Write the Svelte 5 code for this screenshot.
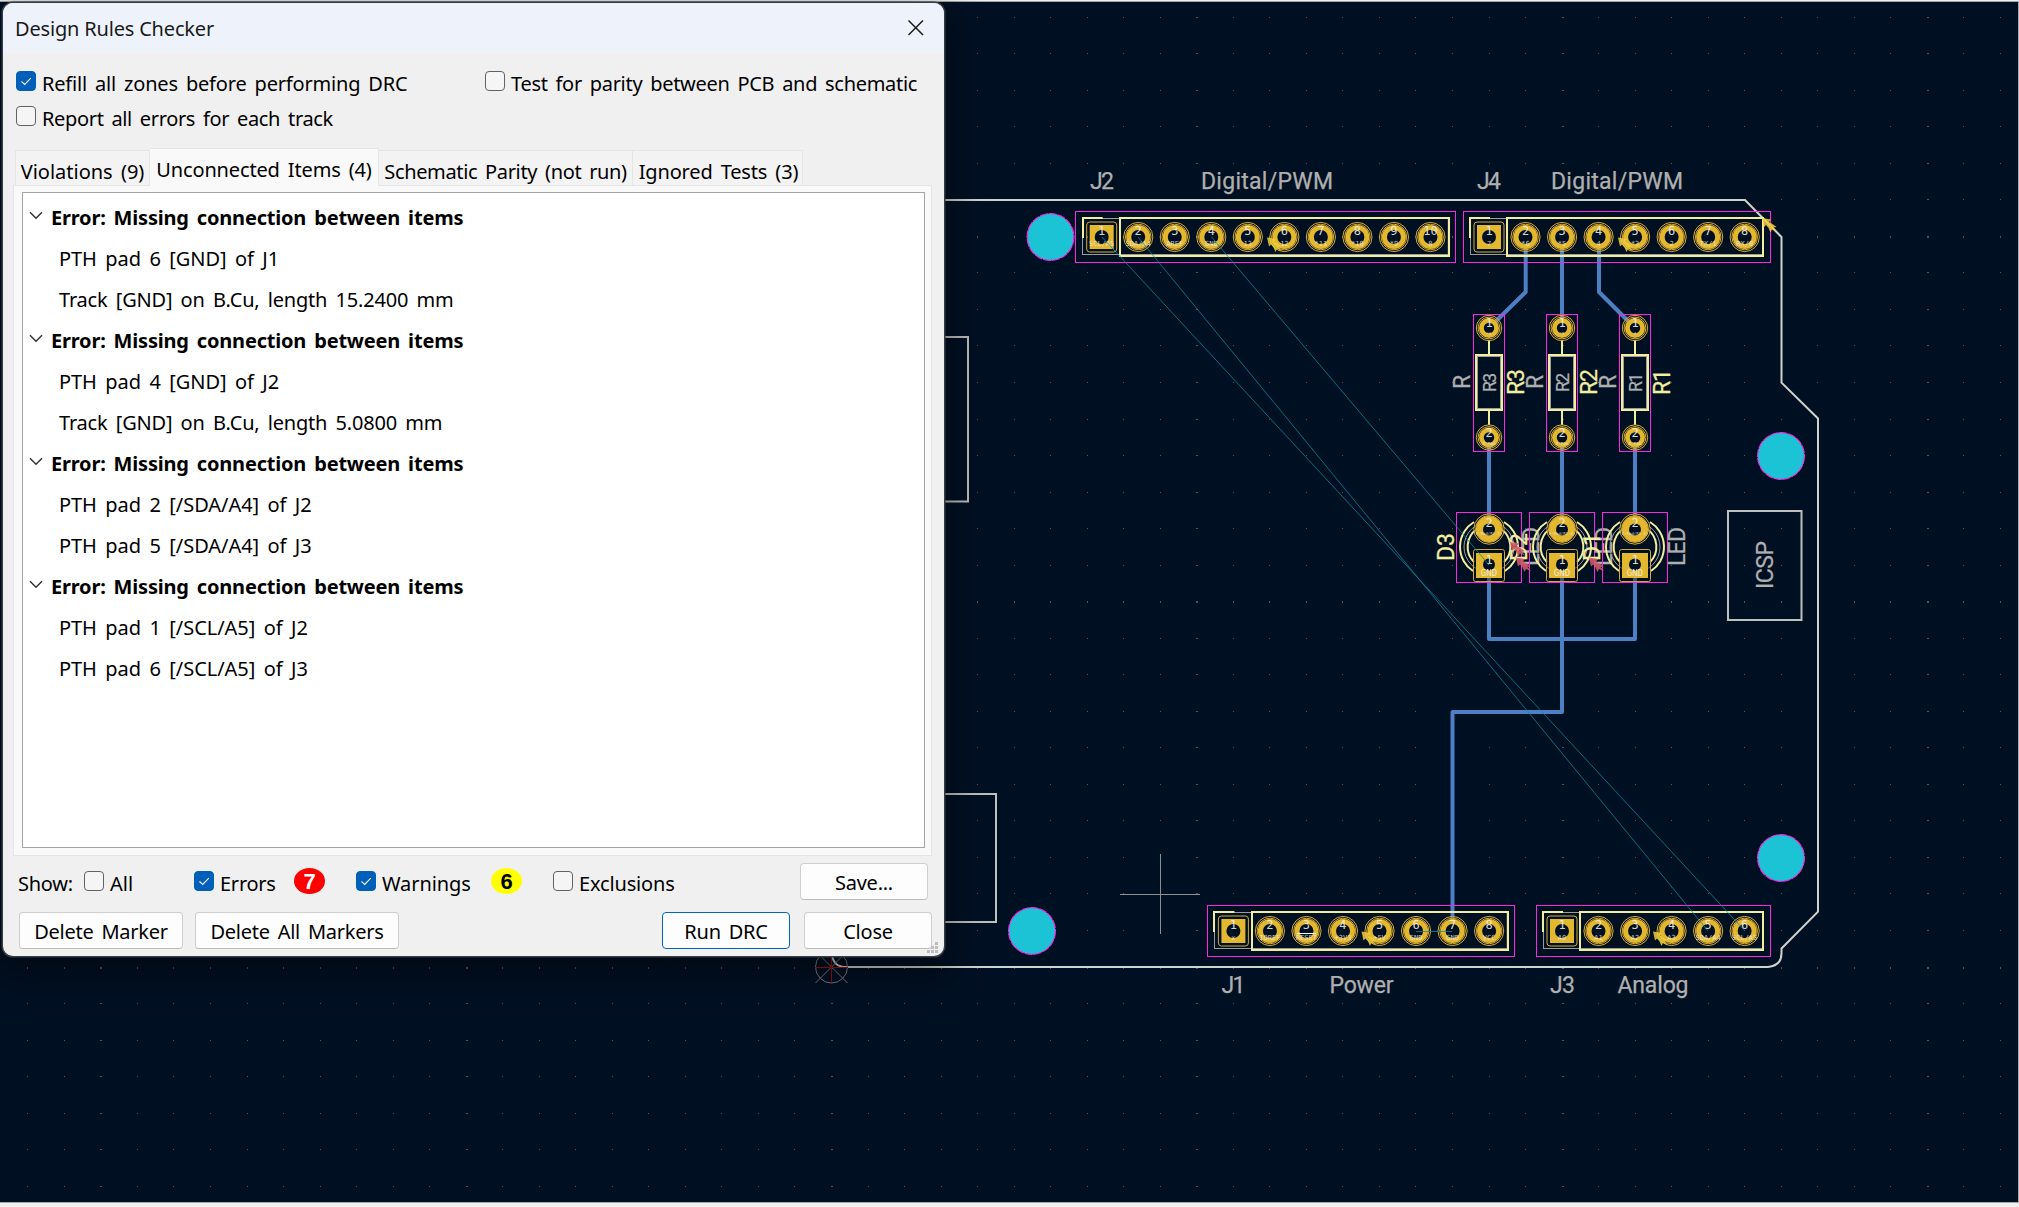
<script>
  const tree = [
    ['PTH pad 6 [GND] of J1', 'Track [GND] on B.Cu, length 15.2400 mm'],
    ['PTH pad 4 [GND] of J2', 'Track [GND] on B.Cu, length 5.0800 mm'],
    ['PTH pad 2 [/SDA/A4] of J2', 'PTH pad 5 [/SDA/A4] of J3'],
    ['PTH pad 1 [/SCL/A5] of J2', 'PTH pad 6 [/SCL/A5] of J3'],
  ];
  const tabs = ['Violations (9)', 'Unconnected Items (4)', 'Schematic Parity (not run)', 'Ignored Tests (3)'];

  // Board grid: 100 mil pitch, every tenth line is heavier
  const P = 36.53;
  const dots = [];
  for (let i = -22; i <= 32; i++) {
    for (let j = -26; j <= 6; j++) {
      const bigX = i % 10 === 0;
      const bigY = j % 10 === 0;
      dots.push({ x: Math.floor(831.5 + i * P), y: Math.floor(967 + j * P), w: bigX ? 2 : 1, h: bigY ? 2 : 1 });
    }
  }

  const headers = [
    { x: 1101.7, y: 237, mark: 1267, nets: ['SCL/A5', 'SDA/A4', 'AREF', 'GND', '13', '12', '*11', '*10', '*9', '8'] },
    { x: 1489, y: 237, mark: 1618, nets: ['7', '*6', '*5', '4', '*3', '2', 'TX/1', 'RX/0'] },
    { x: 1233.4, y: 931, mark: 1361.5, nets: ['x', 'IOREF', 'RESET', '+3V3', '+5V', 'GND', 'GND', 'VCC'] },
    { x: 1562, y: 931, mark: 1653, nets: ['A0', 'A1', 'A2', 'A3', 'SDA/A4', 'SCL/A5'] },
  ];
  const resistors = [
    { x: 1489, ref: 'R3', net: '*6' },
    { x: 1562, ref: 'R2', net: '*5' },
    { x: 1635, ref: 'R1', net: '4' },
  ];
  const leds = [
    { x: 1489, ref: 'D3' },
    { x: 1562, ref: 'D2' },
    { x: 1635, ref: 'D1' },
  ];
  const holes = [[1050.5, 237], [1032, 931], [1781, 456], [1781, 858]];
  const labels = [
    ['J2', 1090, 189, 24], ['Digital/PWM', 1201, 189, 132],
    ['J4', 1477, 189, 24], ['Digital/PWM', 1551, 189, 132],
    ['J1', 1221.5, 993, 24], ['Power', 1329.5, 993, 64],
    ['J3', 1550, 993, 25], ['Analog', 1617.5, 993, 71],
  ];
</script>

{#snippet check(on)}
  <span class="box" class:on>
    {#if on}<svg viewBox="0 0 20 20"><path d="M5.5 10.5 8.7 13.5 14.8 7.2" /></svg>{/if}
  </span>
{/snippet}

{#snippet marker(x, y, kind)}
  <path class={kind} transform="translate({x} {y})" d="M0 0 9 1.500 7 4 10.500 6 14.500 9 11.500 9.500 15 13.500 10 11.500 8.500 14.500 6.500 10 4 7 2 9Z" />
{/snippet}

<div class="screen">
  <svg class="board" width="2019" height="1207" viewBox="0 0 2019 1207">
    <g class="dots">
      {#each dots as d}<rect x={d.x} y={d.y} width={d.w} height={d.h} />{/each}
    </g>

    <path class="edge" d="M832 900V954Q833 967 846 967H1768Q1781.5 966 1781.5 953V948.5L1818 911.7V418.5L1781.5 382.7V237L1745 200H832" />
    <path class="fab2" d="M900 337H968V501.500H900M900 794H996V922H900M1728 511H1801.500V620H1728Z" />

    <g class="origin">
      <circle cx="831.5" cy="967" r="16" />
      <path d="M815.500 951 847.500 983M847.500 951 815.500 983" />
      <path class="red" d="M815 967.500H848M831.500 951V984" />
    </g>
    <path class="cursor" d="M1120 894.500H1200M1160.500 854V934" />

    {#each holes as [x, y]}
      <circle class="hole" cx={x} cy={y} r="23.4" />
    {/each}

    <path class="track" d="M1525.700 237V292L1489 328M1562 237V328M1599 237V292L1635 328M1489 437V529M1562 437V529M1635 437V529M1489 565V639H1635V565M1562 565V712H1452.500V931" />

    {#each headers as h}
      {@const last = h.x + (h.nets.length - 1) * P}
      <rect class="court" x={Math.floor(h.x - 26) + 0.5} y={h.y - 25.5} width={Math.round(last - h.x + 51)} height="51" />
      <rect class="fab" x={Math.floor(h.x - 19) + 0.5} y={h.y - 18.5} width={last - h.x + 37} height="36" />
      <rect class="silk" x={Math.round(h.x + 18.3)} y={h.y - 19} width={Math.round(last - h.x + 0.3)} height="38" />
      <path class="silk" d="M{h.x + 1} {h.y - 19}H{Math.round(h.x - 19)}V{h.y + 1}" />
      {#each h.nets as net, i}
        {@const x = h.x + i * P}
        {#if i === 0}
          <rect class="ring" x={x - 15} y={h.y - 15} width="30" height="30" rx="3" />
          <rect class="pad" x={x - 12} y={h.y - 12} width="24" height="24" />
        {:else}
          <circle class="ring" cx={x} cy={h.y} r="14.6" />
          <circle class="ring" cx={x} cy={h.y} r="12.8" />
          <circle class="pad" cx={x} cy={h.y} r="12" />
        {/if}
        <circle class="drill" cx={x} cy={h.y} r="7" />
        <text class="num" {x} y={h.y - 2}>{i + 1}</text>
        <text class="net" {x} y={h.y + 8.5}>{net}</text>
      {/each}
      {@render marker(h.mark, h.y + 0.5, 'warn')}
    {/each}
    <path class="bar" d="M1297 933.500H1316" />
    {@render marker(1762, 218, 'warn')}

    {#each resistors as r}
      <rect class="court" x={r.x - 15.5} y="314.5" width="31" height="137" />
      <path class="silk" d="M{r.x} 340V355M{r.x} 411V425" />
      <rect class="silk" x={r.x - 13} y="355" width="26" height="55" />
      <rect class="fab" x={r.x - 11.5} y="356.5" width="23" height="52" />
      {#each [328, 437.5] as y, i}
        <circle class="ring" cx={r.x} cy={y} r="12.7" />
        <circle class="ring" cx={r.x} cy={y} r="10.9" />
        <circle class="pad" cx={r.x} cy={y} r="10" />
        <circle class="drill" cx={r.x} cy={y} r="5.2" />
        <text class="num" x={r.x} y={y - 1}>{i + 1}</text>
        <text class="net small" x={r.x} y={y + 7}>{i ? 'D-Pad' : r.net}</text>
      {/each}
      <text class="lab" transform="translate({r.x - 19.5} 389) rotate(-90)">R</text>
      <text class="lab in" transform="translate({r.x + 6.5} 392) rotate(-90)" textLength="19">{r.ref}</text>
      <text class="lab ref" transform="translate({r.x + 35} 395) rotate(-90)" textLength="26">{r.ref}</text>
    {/each}

    {#each leds as l}
      <rect class="court" x={l.x - 32.5} y="512.5" width="65" height="70" />
      <circle class="fab" cx={l.x} cy="547" r="25" />
      <path class="silk" d="M{l.x - 15} 522A29 29 0 0 0 {l.x - 16} 571M{l.x + 15} 522A29 29 0 0 1 {l.x + 16} 571" />
      <path class="silk" d="M{l.x - 12} 529A21.500 21.500 0 0 0 {l.x - 15} 562M{l.x + 12} 529A21.500 21.500 0 0 1 {l.x + 15} 562" />
      <text class="lab" transform="translate({l.x + 50} 566) rotate(-90)" textLength="39">LED</text>
      <text class="lab ref" transform="translate({l.x - 35} 561) rotate(-90)" textLength="28">{l.ref}</text>
    {/each}
    {#each leds as l}
      <circle class="well" cx={l.x} cy="529" r="15.2" />
      <circle class="ring" cx={l.x} cy="529" r="13.4" />
      <circle class="pad" cx={l.x} cy="529" r="13" />
      <circle class="drill" cx={l.x} cy="529.5" r="6" />
      <rect class="well" x={l.x - 15.5} y="549.5" width="31" height="32" rx="2" />
      <rect class="pad" x={l.x - 13} y="553" width="26" height="25" />
      <circle class="drill" cx={l.x} cy="564.5" r="6" />
      <text class="num" x={l.x} y="527">2</text>
      <text class="net small" x={l.x} y="534.5">D-Pad(R1-2)</text>
      <text class="num" x={l.x} y="563.5">1</text>
      <text class="net gnd" x={l.x} y="576">GND</text>
    {/each}
    {@render marker(1510, 542, 'err')}
    {@render marker(1516, 557.5, 'err')}
    {@render marker(1589, 557.5, 'err')}

    <path class="rats" d="M1102 237 1745 931M1138 237 1708 931M1211.500 237 1489 565M1416 931.500H1452" />

    {#each labels as [t, x, y, w]}
      <text class="lab" {x} {y} textLength={w}>{t}</text>
    {/each}
    <text class="lab" transform="translate(1772.500 589) rotate(-90)" textLength="48">ICSP</text>
  </svg>

  <section class="dialog">
    <header>
      <h1>Design Rules Checker</h1>
      <svg class="close" width="16" height="16" viewBox="0 0 16 16"><path d="M.5.500 15 15M15 .500.500 15" /></svg>
    </header>

    <div class="options">
      <label class="refill">{@render check(true)}<span>Refill all zones before performing DRC</span></label>
      <label class="parity">{@render check(false)}<span>Test for parity between PCB and schematic</span></label>
      <label class="report">{@render check(false)}<span>Report all errors for each track</span></label>
    </div>

    <nav>
      {#each tabs as t, i}<div class="tab t{i}" class:sel={i === 1}><span>{t}</span></div>{/each}
    </nav>
    <div class="panel">
      <div class="tree">
        {#each tree as children}
          <div class="row head">
            <svg width="14" height="9" viewBox="0 0 14 9"><path d="M1 1.200 7 7.200 13 1.200" /></svg>
            <b>Error: Missing connection between items</b>
          </div>
          {#each children as c}<div class="row item" class:long={c.startsWith('Track')}><span>{c}</span></div>{/each}
        {/each}
      </div>
    </div>

    <div class="show">
      <span class="cap">Show:</span>
      <label class="c1">{@render check(false)}<span>All</span></label>
      <label class="c2">{@render check(true)}<span>Errors</span></label>
      <i class="badge red">7</i>
      <label class="c3">{@render check(true)}<span>Warnings</span></label>
      <i class="badge yellow">6</i>
      <label class="c4">{@render check(false)}<span>Exclusions</span></label>
      <button class="save">Save...</button>
    </div>
    <div class="actions">
      <button class="dm">Delete Marker</button>
      <button class="da">Delete All Markers</button>
      <button class="run">Run DRC</button>
      <button class="cl">Close</button>
    </div>
    <svg class="grip" width="12" height="12" viewBox="0 0 12 12"><path d="M8 0h3v3h-3zM4 4h3v3h-3zM8 4h3v3h-3zM0 8h3v3h-3zM4 8h3v3h-3zM8 8h3v3h-3z" /></svg>
  </section>
</div>

<style>
  :global(body) { margin: 0; background: #001023; overflow: hidden; }
  .screen {
    position: relative;
    box-sizing: border-box;
    width: 2019px;
    height: 1207px;
    overflow: hidden;
    background: #001023;
    font-family: 'Noto Sans', sans-serif;
  }
  .screen::before {
    content: '';
    position: absolute;
    inset: 0;
    z-index: 1;
    border: solid #a6a6a6;
    border-width: 1px 1px 1px 0;
    margin: 1px 0 4px;
    box-shadow: 0 0 0 5px #f0f0f0;
    pointer-events: none;
  }
  .board { display: block; }
  .dots rect { fill: #4a5663; shape-rendering: crispEdges; }
  .edge { fill: none; stroke: #d0d2cd; stroke-width: 2; }
  .fab2 { fill: none; stroke: #bfbfbf; stroke-width: 2; }
  .fab { fill: none; stroke: #9c9c9c; stroke-width: 1; }
  .court { fill: none; stroke: #ff26e2; stroke-width: 1; }
  .silk { fill: none; stroke: #f2eda1; stroke-width: 2; }
  .ring { fill: none; stroke: #d9a92d; stroke-width: 1; }
  .well { fill: #001023; fill-opacity: 0.35; stroke: #d9a92d; stroke-width: 1; }
  .pad { fill: #e3b72e; }
  .drill { fill: #001023; }
  .track { fill: none; stroke: #4d7fc4; stroke-width: 4; stroke-linejoin: round; }
  .hole { fill: #1bc3d4; stroke: #ff26e2; stroke-width: 1.200; stroke-dasharray: 8 1; }
  .rats { fill: none; stroke: #0b8c9c; stroke-opacity: 0.75; stroke-width: 1; }
  .origin { fill: none; stroke: #7d7d7d; stroke-width: 1; }
  .origin .red { stroke: #a30d10; }
  .cursor { fill: none; stroke: #8f8f8f; stroke-width: 1; shape-rendering: crispEdges; }
  .bar { stroke: #fff; stroke-width: 1; }
  .warn { fill: #f2cf3c; fill-opacity: 0.85; }
  .err { fill: #cf5a6c; fill-opacity: 0.9; }
  .num { font: 12px 'DejaVu Sans Mono', monospace; fill: #f4f0e4; fill-opacity: 0.9; text-anchor: middle; }
  .net { font: 7px 'DejaVu Sans Mono', monospace; fill: #f4f0e4; fill-opacity: 0.8; text-anchor: middle; }
  .net.small { font-size: 4px; }
  .net.gnd { font-size: 9px; fill-opacity: 0.9; }
  .lab { font: 23px Roboto, sans-serif; fill: #afafaf; stroke: #afafaf; stroke-width: 0.250; }
  .lab.in { font-size: 17.5px; }
  .lab.ref { fill: #f2eda1; stroke: #f2eda1; }

  .dialog {
    position: absolute;
    z-index: 2;
    left: 3px;
    top: 3px;
    width: 941px;
    height: 953px;
    border-radius: 10px;
    background: #f0f0f0;
    box-shadow: 0 0 0 1.500px #343d46, 0 12px 40px 6px rgba(0, 0, 0, 0.45);
    display: flex;
    flex-direction: column;
    color: #000;
    font-size: 20px;
    line-height: 26px;
    letter-spacing: -0.25px;
    word-spacing: 3px;
  }
  header {
    display: flex;
    justify-content: space-between;
    align-items: center;
    height: 50px;
    box-sizing: border-box;
    padding: 0 20px 0 12px;
    border-radius: 10px 10px 0 0;
    background: #eef3fb;
  }
  h1 {
    margin: 1px 0 0;
    font-size: 20px;
    font-weight: 400;
    line-height: 26px;
    letter-spacing: -0.18px;
    word-spacing: 0;
    color: #1a1a1a;
  }
  .close { fill: none; stroke: #1a1a1a; stroke-width: 1.500; }
  label { display: flex; align-items: flex-start; gap: 6px; white-space: nowrap; }
  .box {
    box-sizing: border-box;
    width: 20px;
    height: 20px;
    flex: none;
    border: 1px solid #626262;
    border-radius: 4px;
    background: #f5f5f5;
  }
  .box.on { background: #005fb8; border-color: #005fb8; }
  .box svg { display: block; width: 20px; height: 20px; margin: -1px; fill: none; stroke: #fff; stroke-width: 1.100; }
  .options {
    display: grid;
    grid-template-columns: 469px 1fr;
    grid-auto-rows: 35px;
    padding: 18px 0 0 13px;
    height: 78px;
    box-sizing: content-box;
  }
  .refill { letter-spacing: -0.18px; }
  .parity { letter-spacing: -0.3px; }
  .report { letter-spacing: -0.34px; }
  nav {
    display: flex;
    align-items: flex-end;
    height: 37px;
    margin-left: 12px;
    position: relative;
    z-index: 1;
    letter-spacing: -0.15px;
  }
  .tab {
    box-sizing: border-box;
    height: 36px;
    border: 1px solid #e5e5e5;
    border-left-width: 0;
    background: #f3f3f3;
    padding-top: 8px;
    display: flex;
    justify-content: center;
    white-space: nowrap;
  }
  .t0 { width: 135px; border-left-width: 1px; letter-spacing: 0; }
  .t1 { width: 229px; }
  .t2 { width: 254px; letter-spacing: -0.35px; }
  .t3 { width: 170px; padding-left: 2px; }
  .tab.sel { height: 38px; background: #f9f9f9; border-bottom-color: #f9f9f9; }
  .panel {
    box-sizing: border-box;
    width: 919px;
    height: 671px;
    margin: -1px 0 0 10px;
    border: 1px solid #e5e5e5;
    background: #f9f9f9;
    padding: 6px 6px 7px 8px;
  }
  .tree { box-sizing: border-box; height: 100%; border: 1px solid #a3a3a8; background: #fff; padding-top: 4px; }
  .row { height: 41px; display: flex; align-items: center; white-space: nowrap; }
  .head { padding-left: 6px; gap: 8px; letter-spacing: -0.19px; }
  .head svg { fill: none; stroke: #333; stroke-width: 1.500; margin-top: -4px; }
  .item { padding-left: 36px; letter-spacing: -0.05px; word-spacing: 3.3px; }
  .item.long { letter-spacing: -0.2px; }
  .show, .actions { display: flex; align-items: flex-start; }
  .show { flex: none; height: 56px; padding: 7px 16px 0 15px; box-sizing: border-box; }
  .show label, .show .cap { margin-top: 8px; }
  .cap { width: 66px; }
  .c1 { width: 110px; letter-spacing: 0; }
  .c2 { width: 100px; }
  .c3 { width: 135px; letter-spacing: -0.1px; }
  .c4 { width: 150px; letter-spacing: -0.15px; }
  .badge {
    width: 31px;
    height: 26px;
    margin-top: 5px;
    border-radius: 50%;
    font: bold 22px/27px 'Liberation Sans', sans-serif;
    text-align: center;
  }
  .red.badge { background: #f00; color: #fff; margin-right: 31px; }
  .yellow.badge { background: #ff0; color: #000; margin-right: 31px; }
  button {
    box-sizing: border-box;
    height: 37px;
    padding: 3px 0 0;
    border: 1px solid #cfcfcf;
    border-bottom-color: #bdbdbd;
    border-radius: 4px;
    background: #fdfdfd;
    color: #000;
    font: 20px/26px 'Noto Sans', sans-serif;
    letter-spacing: inherit;
    word-spacing: inherit;
    width: 128px;
    white-space: nowrap;
  }
  .save { margin-left: auto; margin-right: 0; }
  .actions { padding: 0 12px 0 16px; }
  .dm { width: 164px; }
  .da { width: 204px; margin-left: 12px; }
  .run { margin-left: auto; border-color: #0067c0; }
  .cl { margin-left: 14px; }
  .grip { position: absolute; right: 5px; bottom: 2px; fill: #bdbdbd; }
</style>
